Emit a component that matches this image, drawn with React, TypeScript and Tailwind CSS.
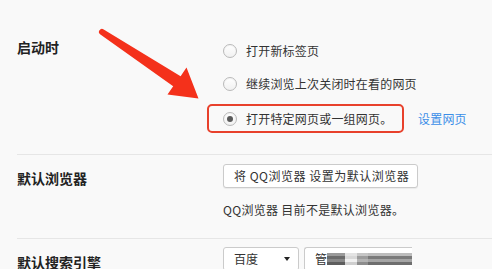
import React from 'react';

const font = { fontFamily: '"Noto Sans CJK SC", "Noto Sans", sans-serif' };

const Radio = ({ checked = false }: { checked?: boolean }) => (
  <span className="w-[14px] h-[14px] shrink-0 rounded-full border border-[#b9b9b9] bg-gradient-to-b from-white to-[#f1f1f1] shadow-[inset_0_1px_1px_rgba(0,0,0,0.05)] flex items-center justify-center">
    {checked && <span className="w-[6px] h-[6px] rounded-full bg-[#5a5a5a]" />}
  </span>
);

const Arrow = () => (
  <svg className="absolute left-0 top-0 pointer-events-none" width="492" height="269" viewBox="0 0 492 269">
    <path
      d="M103.7 29.4 L180.6 76.2 L186.5 67.5 L198.5 98.5 L167.5 94.5 L173.2 86.2 L100.4 34.6 A3 3 0 0 1 103.7 29.4 Z"
      fill="#f4311b"
    />
  </svg>
);

export default function App() {
  return (
    <div className="relative w-[492px] h-[269px] overflow-hidden bg-[#f9f9f9] pl-[17px] text-[#222]" style={font}>
      {/* 启动时 */}
      <section className="flex pb-[21px]">
        <div className="w-[206px] shrink-0 pt-[37px] text-[14px] leading-[20px] font-bold">启动时</div>
        <div className="flex flex-col pt-[34px] text-[12px] leading-[16px] text-[#333] tracking-[0.2px]">
          <label className="h-[33px] flex items-center gap-[9px]">
            <Radio />
            <span>打开新标签页</span>
          </label>
          <label className="h-[33px] flex items-center gap-[9px]">
            <Radio />
            <span>继续浏览上次关闭时在看的网页</span>
          </label>
          <div className="mt-[4px] flex items-center">
            <label className="-ml-[16px] w-[197px] h-[29px] pl-[14px] border-2 border-[#e8412c] rounded-[5px] flex items-center gap-[9px]">
              <Radio checked />
              <span>打开特定网页或一组网页。</span>
            </label>
            <a className="ml-[14px] text-[#3b8ee8]">设置网页</a>
          </div>
        </div>
      </section>

      {/* 默认浏览器 */}
      <section className="flex border-t border-[#e6e6e6] pb-[20px]">
        <div className="w-[206px] shrink-0 pt-[13px] text-[14px] leading-[20px] font-bold">默认浏览器</div>
        <div className="flex flex-col pt-[9px] text-[12px] leading-[16px] text-[#333]">
          <button className="w-[195px] h-[24px] pl-[10px] text-left bg-white border border-[#cbcbcb] rounded-[3px] shadow-[0_1px_1px_rgba(0,0,0,0.06)] tracking-[0.5px]">
            将 QQ浏览器 设置为默认浏览器
          </button>
          <p className="mt-[14px] tracking-[0.3px]">QQ浏览器 目前不是默认浏览器。</p>
        </div>
      </section>

      {/* 默认搜索引擎 */}
      <section className="flex border-t border-[#e6e6e6]">
        <div className="w-[206px] shrink-0 pt-[13px] text-[14px] leading-[20px] font-bold">默认搜索引擎</div>
        <div className="flex gap-[5px] pt-[8px] text-[12px] leading-[16px] text-[#333]">
          <div className="w-[76px] h-[24px] pl-[10px] pr-[8px] bg-white border border-[#cbcbcb] rounded-[3px] flex items-center justify-between">
            <span>百度</span>
            <span className="w-0 h-0 border-l-[3.5px] border-r-[3.5px] border-t-[4px] border-l-transparent border-r-transparent border-t-[#222]" />
          </div>
          <div className="w-[108px] h-[24px] pl-[10px] bg-white border border-r-0 border-[#cbcbcb] rounded-l-[3px] flex items-center">
            <span>管</span>
            <div className="flex flex-col w-[86px]">
              <div className="flex h-[3px]">
                <div className="w-[18px] bg-[#9a9a9a]" />
                <div className="w-[12px] bg-[#e4e4e4]" />
                <div className="w-[11px] bg-[#c6c6c6]" />
                <div className="flex-1 bg-[#bdbdbd]" />
              </div>
              <div className="flex h-[3px]">
                <div className="w-[18px] bg-[#6b6b6b]" />
                <div className="w-[12px] bg-[#d8d8d8]" />
                <div className="w-[11px] bg-[#9c9c9c]" />
                <div className="flex-1 bg-[#7a7a7a]" />
              </div>
              <div className="flex h-[3px]">
                <div className="w-[18px] bg-[#888]" />
                <div className="w-[12px] bg-[#f0f0f0]" />
                <div className="w-[11px] bg-[#b3b3b3]" />
                <div className="flex-1 bg-[#a5a5a5]" />
              </div>
              <div className="flex h-[3px]">
                <div className="w-[18px] bg-[#5e5e5e]" />
                <div className="w-[12px] bg-[#cfcfcf]" />
                <div className="w-[11px] bg-[#8d8d8d]" />
                <div className="flex-1 bg-[#6e6e6e]" />
              </div>
            </div>
          </div>
        </div>
      </section>

      <Arrow />
    </div>
  );
}
